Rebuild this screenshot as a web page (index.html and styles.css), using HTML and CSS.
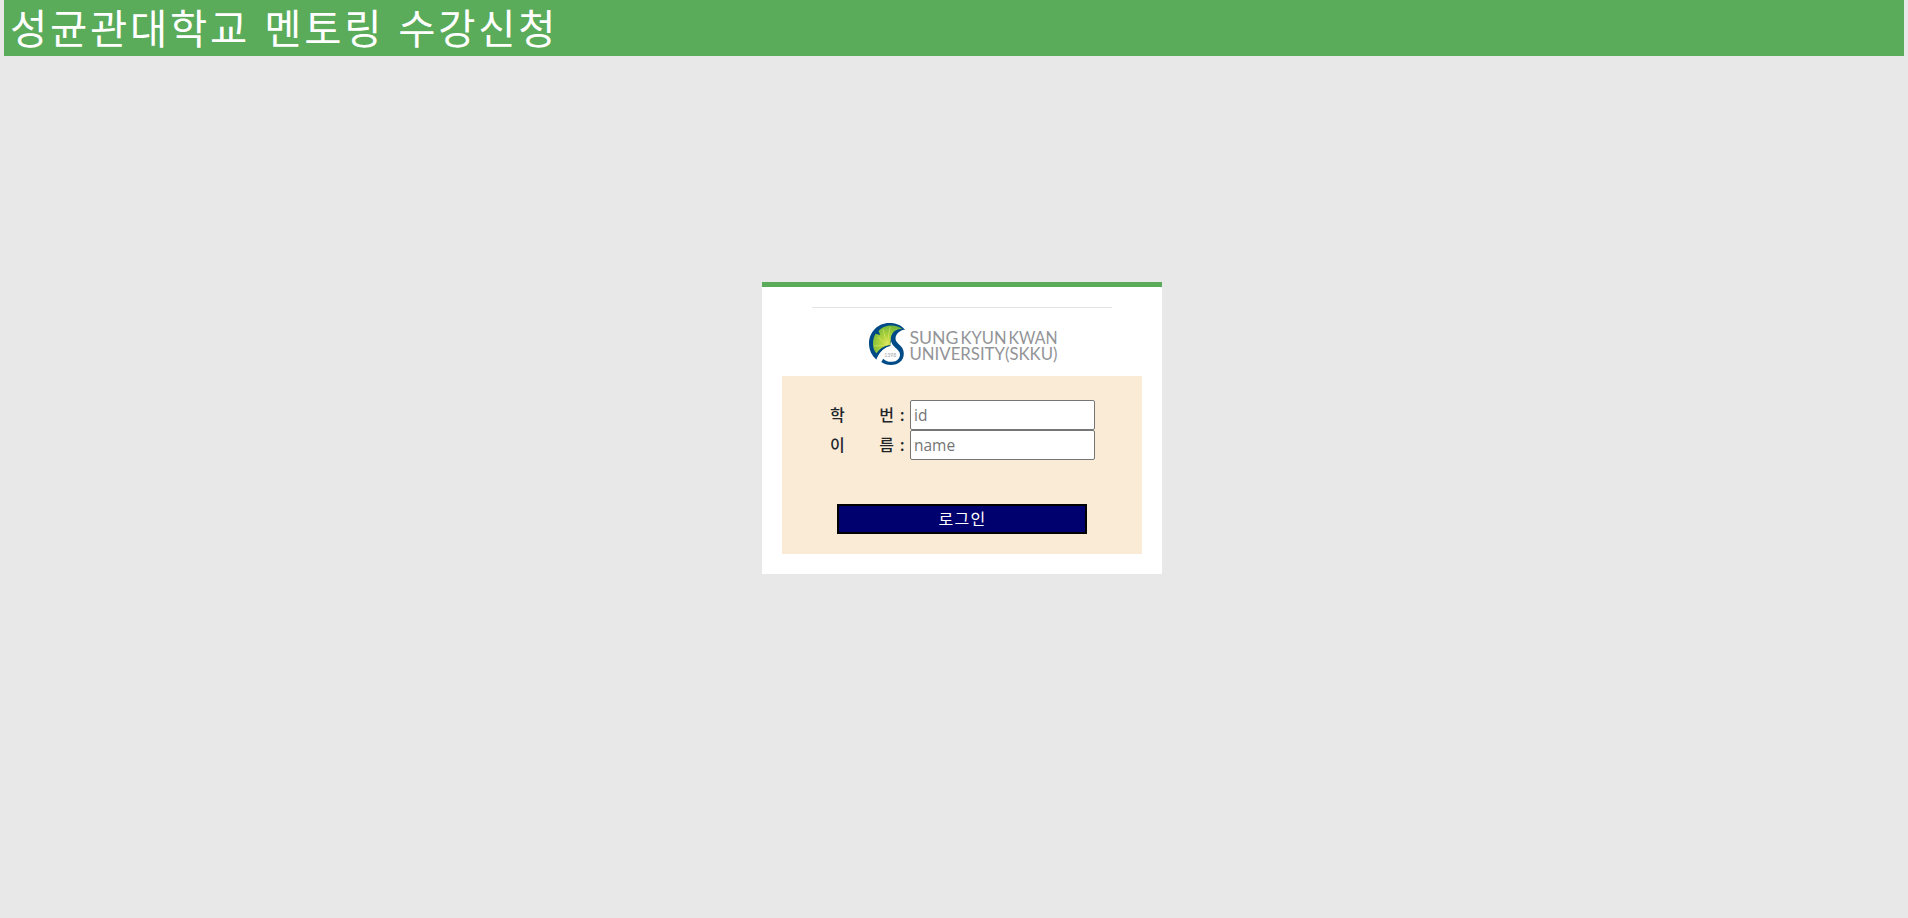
FILE: index.html
```html
<!DOCTYPE html>
<html lang="ko">
<head>
<meta charset="utf-8">
<title>성균관대학교 멘토링 수강신청</title>
<link rel="stylesheet" href="styles.css">
</head>
<body>
<header class="topbar"><h1 class="title">성균관대학교 멘토링 수강신청</h1></header>
<main class="card">
  <hr class="rule">
  <svg class="logo" width="192" height="44" viewBox="0 0 192 44" role="img">
    <defs>
      <radialGradient id="leaf" gradientUnits="userSpaceOnUse" cx="18" cy="20" r="18">
        <stop offset="0" stop-color="#d3e04a"/><stop offset=".5" stop-color="#a5cf3c"/><stop offset="1" stop-color="#72b63b"/>
      </radialGradient>
    </defs>
    <path fill="#004b87" d="M36 7C32 1.500 26 0 20 0C9 0 0 9 0 20.500C0 27 3 33 7.500 36.500C9 31 14 26 21 22.500L24 10C27 6.500 32 6 36 7Z"/>
    <path fill="url(#leaf)" d="M34 6.500C30 3 25 2 20 2.500C16 3 12 5 9.500 8L11.300 12L6.500 10.800C3 17 3 26 7.500 30.500C10 26 15 23 21.500 22.200C21 15 23 9 34 6.500Z"/>
    <path fill="none" stroke="#e1eb72" stroke-width=".55" d="M18 22L9 14M18 22L14 6M18 22L21 4M18 22L28 6M18 22L5 23"/>
    <path fill="#fff" d="M9 35C11 28 16 24 22 23C27 24 31 28 31 32C30 37 26 39 21 38.500L14 36Z"/>
    <path fill="#004b87" d="M36 6.500C31 7 26.500 11 26.500 15.500C26.500 21 34.800 22 34.800 30.500C34.800 38 29 42 22 42C18 42 15 41 12.300 39L14.200 35.700C17 38.500 20 39 23 38.800C28 38.600 31 35.500 31 31.500C31 26 22 24 21.800 16.500C21.700 10 27 4.500 36 6.500Z"/>
    <path fill="none" stroke="#004b87" stroke-width="1.200" d="M7 33C10 27 15 23 21.500 22.500"/>
    <text class="year" x="15.300" y="33.600" textLength="12" lengthAdjust="spacingAndGlyphs">1398</text>
    <g class="wordmark">
      <text x="40.500" y="21" textLength="49" lengthAdjust="spacingAndGlyphs">SUNG</text>
      <text x="91.500" y="21" textLength="46" lengthAdjust="spacingAndGlyphs">KYUN</text>
      <text x="139.500" y="21" textLength="49" lengthAdjust="spacingAndGlyphs">KWAN</text>
      <text x="40.500" y="37.300" textLength="148" lengthAdjust="spacingAndGlyphs">UNIVERSITY(SKKU)</text>
    </g>
  </svg>
  <form class="login">
    <label class="row"><span class="name"><span>학</span><span>번</span></span><span class="colon">:</span><input class="field" type="text" placeholder="id"></label>
    <label class="row"><span class="name"><span>이</span><span>름</span></span><span class="colon">:</span><input class="field" type="text" placeholder="name"></label>
    <button class="submit" type="button">로그인</button>
  </form>
</main>
</body>
</html>
```
FILE: styles.css
```css
* { box-sizing: border-box; }
body {
  margin: 0;
  padding: 0 4px;
  background: #e8e8e8;
  color: #212529;
  font: 16px/24px "Noto Sans", "Noto Sans CJK KR", sans-serif;
}
.topbar { height: 56px; padding-left: 6px; background: #5aab5a; }
.title {
  margin: 0;
  color: #fff;
  font: 400 40.500px/54px "Noto Sans CJK KR", sans-serif;
  letter-spacing: 2.750px;
  white-space: nowrap;
}
.card {
  display: flex;
  flex-direction: column;
  align-items: center;
  width: 400px;
  height: 292px;
  margin: 226px 0 0 758px;
  padding: 20px;
  border-top: 5px solid #5aab5a;
  background: #fff;
}
.rule { width: 300px; height: 1px; margin: 0; border: 0; background: #e4e4e4; }
.logo { display: block; flex: none; overflow: visible; margin: 15px 0 9px 6px; }
.wordmark { fill: #929497; font: 16.500px Lato, sans-serif; }
.year { fill: #a3a7aa; font: 6px Lato, sans-serif; }
.login {
  display: flex;
  flex-direction: column;
  width: 360px;
  height: 178px;
  padding: 24px 47px 20px;
  background: #faebd7;
}
.row { display: flex; align-items: center; height: 30px; }
.name {
  display: flex;
  justify-content: space-between;
  width: 65px;
  padding: 0 0 2px 1px;
  font-family: "Noto Sans CJK KR", sans-serif;
  font-weight: 500;
}
.colon { width: 16px; padding-left: 6px; font-weight: 600; }
.field {
  width: 185px;
  height: 30px;
  padding: 1px 3px;
  border: 1px solid #767676;
  border-radius: 2px;
  color: #212529;
  font: 15.500px/24px "Open Sans", "Noto Sans CJK KR", sans-serif;
}
.field::placeholder { color: #757575; }
.submit {
  width: 250px;
  height: 30px;
  margin: auto 0 0 8px;
  padding: 0 0 2px 1px;
  border: 2px solid #000;
  background: #00006e;
  color: #fff;
  font: 16px/24px "Noto Sans CJK KR", sans-serif;
  letter-spacing: 1.3px;
}
```
